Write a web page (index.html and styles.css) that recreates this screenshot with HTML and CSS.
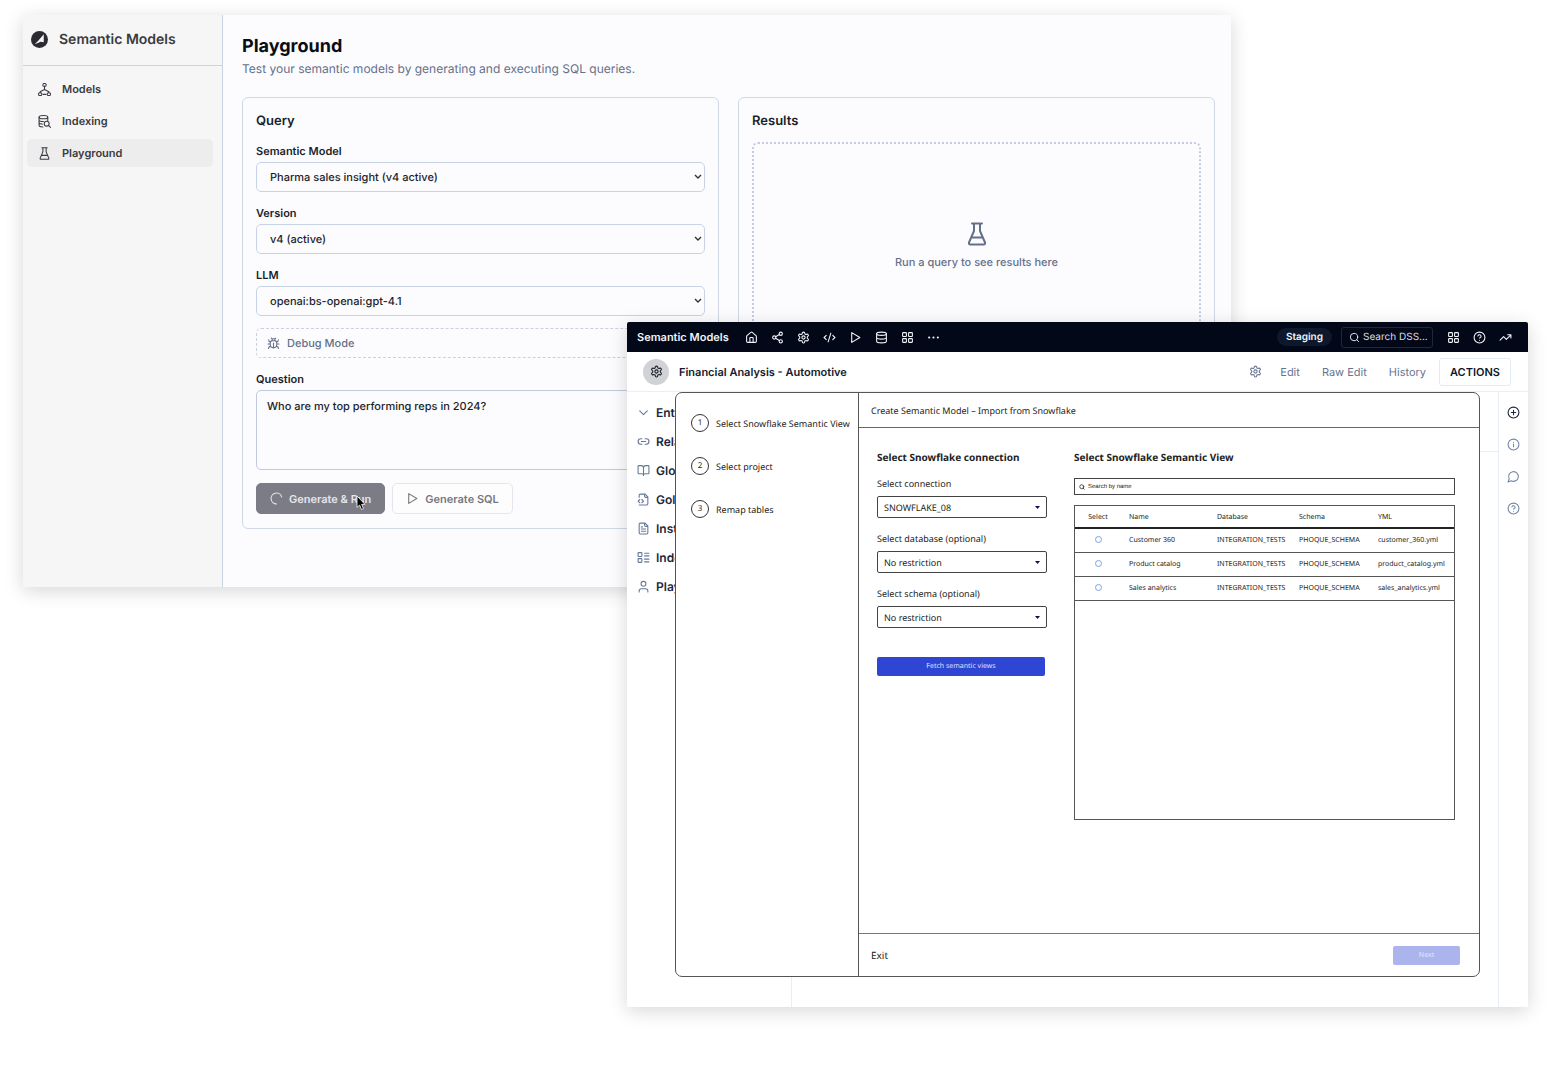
FILE: index.html
```html
<!DOCTYPE html>
<html lang="en">
<head>
    <meta charset="UTF-8">
    <title>Semantic Models</title>
    <link rel="stylesheet" href="styles.css">
</head>
<body>
    <svg class="sprite" aria-hidden="true">
        <symbol id="i-tree" viewBox="0 0 24 24"><rect x="9" y="1" width="6" height="5" rx="2"/><rect x="1" y="18" width="6" height="5" rx="2"/><rect x="17" y="18" width="6" height="5" rx="2"/><path d="M12 6v6M4 18v-2l8-4 8 4v2M9.500 21h5"/></symbol>
        <symbol id="i-dbsearch" viewBox="0 0 24 24"><ellipse cx="10" cy="4" rx="8" ry="3"/><path d="M2 4v15c0 1.700 3 3 7 3M2 9c0 1.700 3.500 3 8 3M2 14c0 1.700 2.500 2.600 6 2.900M18 4v6"/><circle cx="16" cy="16" r="4.500"/><path d="M19.300 19.300L23 23"/></symbol>
        <symbol id="i-flask" viewBox="0 0 24 24"><path d="M7 1.500h10M9 1.500V9L4 20.500c-.4 1 .2 2 1.300 2h13.400c1.100 0 1.700-1 1.300-2L15 9V1.500M6.500 15.500h11"/></symbol>
        <symbol id="i-bug" viewBox="0 0 24 24"><path d="m8 2 1.880 1.880M14.120 3.880 16 2M9 7.130v-1a3 3 0 1 1 6 0v1M12 20c-3.300 0-6-2.700-6-6v-3a4 4 0 0 1 4-4h4a4 4 0 0 1 4 4v3c0 3.300-2.700 6-6 6M12 20v-9M6.530 9C4.600 8.800 3 7.100 3 5M6 13H2M3 21c0-2.100 1.700-3.900 3.800-4M20.970 5c0 2.100-1.600 3.800-3.500 4M22 13h-4M17.200 17c2.100.1 3.800 1.900 3.800 4"/></symbol>
        <symbol id="i-loader" viewBox="0 0 24 24"><path d="M12 22A10 10 0 1 1 21.500 9"/></symbol>
        <symbol id="i-play" viewBox="0 0 24 24"><path d="M5 3l15 9-15 9z"/></symbol>
        <symbol id="i-home" viewBox="0 0 24 24"><path d="M15 21v-8a1 1 0 0 0-1-1h-4a1 1 0 0 0-1 1v8M3 10a2 2 0 0 1 .700-1.500l7-6a2 2 0 0 1 2.600 0l7 6A2 2 0 0 1 21 10v9a2 2 0 0 1-2 2H5a2 2 0 0 1-2-2z"/></symbol>
        <symbol id="i-share" viewBox="0 0 24 24"><circle cx="18" cy="5" r="3"/><circle cx="6" cy="12" r="3"/><circle cx="18" cy="19" r="3"/><path d="M8.600 13.500l6.800 4M15.400 6.500l-6.800 4"/></symbol>
        <symbol id="i-gear" viewBox="0 0 24 24"><path d="M12.220 2h-.44a2 2 0 0 0-2 2v.18a2 2 0 0 1-1 1.730l-.43.25a2 2 0 0 1-2 0l-.15-.08a2 2 0 0 0-2.730.73l-.22.38a2 2 0 0 0 .73 2.730l.15.1a2 2 0 0 1 1 1.720v.51a2 2 0 0 1-1 1.740l-.15.09a2 2 0 0 0-.73 2.730l.22.38a2 2 0 0 0 2.730.73l.15-.08a2 2 0 0 1 2 0l.43.25a2 2 0 0 1 1 1.730V20a2 2 0 0 0 2 2h.44a2 2 0 0 0 2-2v-.18a2 2 0 0 1 1-1.730l.43-.25a2 2 0 0 1 2 0l.15.08a2 2 0 0 0 2.730-.73l.22-.39a2 2 0 0 0-.73-2.730l-.15-.08a2 2 0 0 1-1-1.740v-.5a2 2 0 0 1 1-1.740l.15-.09a2 2 0 0 0 .73-2.730l-.22-.38a2 2 0 0 0-2.730-.73l-.15.08a2 2 0 0 1-2 0l-.43-.25a2 2 0 0 1-1-1.730V4a2 2 0 0 0-2-2z"/><circle cx="12" cy="12" r="3"/></symbol>
        <symbol id="i-code" viewBox="0 0 24 24"><path d="M18 16l4-4-4-4M6 8l-4 4 4 4M14.500 4l-5 16"/></symbol>
        <symbol id="i-db" viewBox="0 0 24 24"><ellipse cx="12" cy="5" rx="9" ry="3"/><path d="M3 5v14a9 3 0 0 0 18 0V5M3 12a9 3 0 0 0 18 0"/></symbol>
        <symbol id="i-grid" viewBox="0 0 24 24"><rect x="3" y="3" width="7" height="7" rx="1"/><rect x="14" y="3" width="7" height="7" rx="1"/><rect x="14" y="14" width="7" height="7" rx="1"/><rect x="3" y="14" width="7" height="7" rx="1"/></symbol>
        <symbol id="i-dots" viewBox="0 0 24 24"><circle cx="4" cy="12" r="1"/><circle cx="12" cy="12" r="1"/><circle cx="20" cy="12" r="1"/></symbol>
        <symbol id="i-search" viewBox="0 0 24 24"><circle cx="11" cy="11" r="8"/><path d="M21 21l-4.300-4.300"/></symbol>
        <symbol id="i-help" viewBox="0 0 24 24"><circle cx="12" cy="12" r="10"/><path d="M9.090 9a3 3 0 0 1 5.830 1c0 2-3 3-3 3M12 17h.01"/></symbol>
        <symbol id="i-trend" viewBox="0 0 24 24"><path d="M22 7l-8.500 8.500-5-5L2 17M16 7h6v6"/></symbol>
        <symbol id="i-chevron" viewBox="0 0 24 24"><path d="M5 9l7 7 7-7"/></symbol>
        <symbol id="i-link" viewBox="0 0 24 24"><path d="M9 17H7A5 5 0 0 1 7 7h2M15 7h2a5 5 0 1 1 0 10h-2M8 12h8"/></symbol>
        <symbol id="i-book" viewBox="0 0 24 24"><path d="M12 7v14M3 18a1 1 0 0 1-1-1V4a1 1 0 0 1 1-1h5a4 4 0 0 1 4 4 4 4 0 0 1 4-4h5a1 1 0 0 1 1 1v13a1 1 0 0 1-1 1h-6a3 3 0 0 0-3 3 3 3 0 0 0-3-3z"/></symbol>
        <symbol id="i-filecode" viewBox="0 0 24 24"><path d="M4 22h14a2 2 0 0 0 2-2V7l-5-5H6a2 2 0 0 0-2 2v4M14 2v4a2 2 0 0 0 2 2h4M5 12l-3 3 3 3M9 18l3-3-3-3"/></symbol>
        <symbol id="i-file" viewBox="0 0 24 24"><path d="M15 2H6a2 2 0 0 0-2 2v16a2 2 0 0 0 2 2h12a2 2 0 0 0 2-2V7zM14 2v4a2 2 0 0 0 2 2h4M10 9H8M16 13H8M16 17H8"/></symbol>
        <symbol id="i-list" viewBox="0 0 24 24"><rect x="2" y="3" width="7" height="7" rx="1"/><rect x="2" y="14" width="7" height="7" rx="1"/><path d="M14 4h8M14 9h8M14 15h8M14 20h8"/></symbol>
        <symbol id="i-user" viewBox="0 0 24 24"><circle cx="12" cy="7" r="4.500"/><path d="M20 22v-2a4 4 0 0 0-4-4H8a4 4 0 0 0-4 4v2"/></symbol>
        <symbol id="i-plus" viewBox="0 0 24 24"><circle cx="12" cy="12" r="10"/><path d="M8 12h8M12 8v8"/></symbol>
        <symbol id="i-info" viewBox="0 0 24 24"><circle cx="12" cy="12" r="10"/><path d="M12 16v-5M12 8h.01"/></symbol>
        <symbol id="i-chat" viewBox="0 0 24 24"><path d="M7.900 20A9 9 0 1 0 4 16.100L2 22z"/></symbol>
    </svg>

    <!-- Playground -->
    <div class="window playground">
        <aside class="side">
            <div class="brand">
                <svg class="logo" viewBox="0 0 16 16"><circle cx="8" cy="8" r="8"/><path class="bird" d="M12 3v7.500L9 10l-2 1-3.500 1.500L7 9z"/></svg>
                <span>Semantic Models</span>
            </div>
            <nav class="side-nav">
                <a href="#"><svg class="icon"><use href="#i-tree"/></svg>Models</a>
                <a href="#"><svg class="icon"><use href="#i-dbsearch"/></svg>Indexing</a>
                <a href="#" class="active"><svg class="icon"><use href="#i-flask"/></svg>Playground</a>
            </nav>
        </aside>
        <main class="content">
            <h1>Playground</h1>
            <p class="subtitle">Test your semantic models by generating and executing SQL queries.</p>
            <div class="cards">
                <form class="card">
                    <h2>Query</h2>
                    <label for="model">Semantic Model</label>
                    <select id="model"><option>Pharma sales insight (v4 active)</option></select>
                    <label for="version">Version</label>
                    <select id="version"><option>v4 (active)</option></select>
                    <label for="llm">LLM</label>
                    <select id="llm"><option>openai:bs-openai:gpt-4.1</option></select>
                    <button type="button" class="debug"><svg class="icon"><use href="#i-bug"/></svg>Debug Mode</button>
                    <label for="question">Question</label>
                    <textarea id="question">Who are my top performing reps in 2024?</textarea>
                    <div class="buttons">
                        <button type="button" class="btn primary">
                            <svg class="icon"><use href="#i-loader"/></svg>Generate &amp; Run
                            <svg class="cursor" viewBox="0 0 10 16"><path d="M1 1v11.500l2.600-2.400L5.500 14.500l2-.9-1.900-4.200H9z"/></svg>
                        </button>
                        <button type="button" class="btn"><svg class="icon"><use href="#i-play"/></svg>Generate SQL</button>
                    </div>
                </form>
                <section class="card">
                    <h2>Results</h2>
                    <div class="empty">
                        <svg class="icon"><use href="#i-flask"/></svg>
                        <p>Run a query to see results here</p>
                    </div>
                </section>
            </div>
        </main>
    </div>

    <!-- Model editor with the import wizard open -->
    <div class="window editor">
        <header class="topbar">
            <strong>Semantic Models</strong>
            <nav class="topbar-icons">
                <a href="#" aria-label="Home"><svg class="icon"><use href="#i-home"/></svg></a>
                <a href="#" aria-label="Flow"><svg class="icon"><use href="#i-share"/></svg></a>
                <a href="#" aria-label="Settings"><svg class="icon"><use href="#i-gear"/></svg></a>
                <a href="#" aria-label="Code"><svg class="icon"><use href="#i-code"/></svg></a>
                <a href="#" aria-label="Jobs"><svg class="icon"><use href="#i-play"/></svg></a>
                <a href="#" aria-label="Data"><svg class="icon"><use href="#i-db"/></svg></a>
                <a href="#" aria-label="Dashboards"><svg class="icon"><use href="#i-grid"/></svg></a>
                <a href="#" aria-label="More"><svg class="icon"><use href="#i-dots"/></svg></a>
            </nav>
            <span class="pill">Staging</span>
            <div class="dss-search">
                <svg class="icon"><use href="#i-search"/></svg>
                <input type="text" placeholder="Search DSS..." aria-label="Search DSS">
            </div>
            <nav class="topbar-icons">
                <a href="#" aria-label="Apps"><svg class="icon"><use href="#i-grid"/></svg></a>
                <a href="#" aria-label="Help"><svg class="icon"><use href="#i-help"/></svg></a>
                <a href="#" aria-label="Activity"><svg class="icon"><use href="#i-trend"/></svg></a>
            </nav>
        </header>
        <div class="titlebar">
            <span class="avatar"><svg class="icon"><use href="#i-gear"/></svg></span>
            <h2>Financial Analysis - Automotive</h2>
            <nav class="tabs">
                <a href="#" aria-label="Settings"><svg class="icon"><use href="#i-gear"/></svg></a>
                <a href="#">Edit</a>
                <a href="#">Raw Edit</a>
                <a href="#">History</a>
            </nav>
            <button type="button" class="actions">ACTIONS</button>
        </div>
        <div class="workspace">
            <nav class="sections">
                <a href="#"><svg class="icon"><use href="#i-chevron"/></svg>Entities</a>
                <a href="#"><svg class="icon"><use href="#i-link"/></svg>Relations</a>
                <a href="#"><svg class="icon"><use href="#i-book"/></svg>Glossary</a>
                <a href="#"><svg class="icon"><use href="#i-filecode"/></svg>Golden</a>
                <a href="#"><svg class="icon"><use href="#i-file"/></svg>Instructions</a>
                <a href="#"><svg class="icon"><use href="#i-list"/></svg>Indexing</a>
                <a href="#"><svg class="icon"><use href="#i-user"/></svg>Playground</a>
            </nav>
            <div class="canvas"><div class="canvas-head"></div></div>
            <nav class="rail">
                <a href="#" class="current" aria-label="Add"><svg class="icon"><use href="#i-plus"/></svg></a>
                <a href="#" aria-label="Info"><svg class="icon"><use href="#i-info"/></svg></a>
                <a href="#" aria-label="Chat"><svg class="icon"><use href="#i-chat"/></svg></a>
                <a href="#" aria-label="Help"><svg class="icon"><use href="#i-help"/></svg></a>
            </nav>

            <div class="wizard">
                <ol class="steps">
                    <li><span>1</span>Select Snowflake Semantic View</li>
                    <li><span>2</span>Select project</li>
                    <li><span>3</span>Remap tables</li>
                </ol>
                <div class="panel">
                    <div class="panel-head">Create Semantic Model – Import from Snowflake</div>
                    <div class="panel-body">
                        <form class="connection">
                            <h3>Select Snowflake connection</h3>
                            <label for="conn">Select connection</label>
                            <select id="conn"><option>SNOWFLAKE_08</option></select>
                            <label for="db">Select database (optional)</label>
                            <select id="db"><option>No restriction</option></select>
                            <label for="schema">Select schema (optional)</label>
                            <select id="schema"><option>No restriction</option></select>
                            <button type="button" class="small-btn">Fetch semantic views</button>
                        </form>
                        <section class="views">
                            <h3>Select Snowflake Semantic View</h3>
                            <div class="name-search">
                                <svg class="icon"><use href="#i-search"/></svg>
                                <input type="text" placeholder="Search by name" aria-label="Search by name">
                            </div>
                            <div class="table-box">
                                <table>
                                    <thead>
                                        <tr><th class="pick">Select</th><th class="name">Name</th><th class="database">Database</th><th class="schema">Schema</th><th>YML</th></tr>
                                    </thead>
                                    <tbody>
                                        <tr><td class="pick"><input type="radio" name="view" aria-label="Customer 360"></td><td>Customer 360</td><td>INTEGRATION_TESTS</td><td>PHOQUE_SCHEMA</td><td>customer_360.yml</td></tr>
                                        <tr><td class="pick"><input type="radio" name="view" aria-label="Product catalog"></td><td>Product catalog</td><td>INTEGRATION_TESTS</td><td>PHOQUE_SCHEMA</td><td>product_catalog.yml</td></tr>
                                        <tr><td class="pick"><input type="radio" name="view" aria-label="Sales analytics"></td><td>Sales analytics</td><td>INTEGRATION_TESTS</td><td>PHOQUE_SCHEMA</td><td>sales_analytics.yml</td></tr>
                                    </tbody>
                                </table>
                            </div>
                        </section>
                    </div>
                    <div class="panel-foot">
                        <a href="#">Exit</a>
                        <button type="button" class="small-btn" disabled>Next</button>
                    </div>
                </div>
            </div>
        </div>
    </div>
</body>
</html>
```
FILE: styles.css
```css
* {
    box-sizing: border-box;
}
body {
    margin: 0;
    min-height: 100vh;
    background: #fff;
    font-family: Inter, sans-serif;
    font-size: 11px;
    color: #1b1f2a;
    text-rendering: geometricPrecision;
}
h1, h2, h3, p, ol {
    margin: 0;
    padding: 0;
}
a {
    color: inherit;
    text-decoration: none;
}
button, input, select, textarea {
    font: inherit;
    color: inherit;
    text-rendering: inherit;
}
.sprite {
    display: none;
}
.icon {
    width: 13px;
    height: 13px;
    flex: none;
    fill: none;
    stroke: currentColor;
    stroke-width: 2;
    stroke-linecap: round;
    stroke-linejoin: round;
}
.window {
    position: absolute;
    box-shadow: 0 4px 18px rgba(0, 0, 0, 0.16);
}

/* playground window */
.playground {
    top: 15px;
    left: 23px;
    right: 335px;
    display: flex;
    background: #fcfcfe;
}
.side {
    width: 200px;
    flex: none;
    background: #f6f6f7;
    border-right: 1px solid #c9d3e2;
    color: #3a3a40;
}
.brand {
    display: flex;
    align-items: center;
    gap: 11px;
    height: 51px;
    padding: 0 8px 2px;
    border-bottom: 1px solid #c9d3e2;
    font-size: 14px;
    font-weight: 600;
}
.logo {
    width: 17px;
    height: 17px;
    fill: #2b2b31;
}
.bird {
    fill: #f6f6f7;
}
.side-nav {
    display: flex;
    flex-direction: column;
    gap: 4px;
    padding: 9px 9px 9px 4px;
}
.side-nav a {
    display: flex;
    align-items: center;
    gap: 11px;
    height: 28px;
    padding: 0 11px;
    border-radius: 5px;
    font-weight: 600;
}
.side-nav .active {
    background: #ededee;
}
.content {
    flex: 1;
    padding: 20px 16px 58px 19px;
}
h1 {
    font-size: 18px;
    line-height: 24px;
    font-weight: 700;
    color: #0b0d14;
}
.subtitle {
    font-size: 12px;
    line-height: 20px;
    color: #64708a;
}
.cards {
    display: grid;
    grid-template-columns: 1fr 1fr;
    gap: 19px;
    margin-top: 18px;
}
.card {
    padding: 14px 13px;
    border: 1px solid #d0d8e6;
    border-radius: 6px;
}
.card h2 {
    margin-bottom: 12px;
    font-size: 13px;
    line-height: 18px;
    font-weight: 600;
}
.card label {
    display: block;
    margin-bottom: 2px;
    line-height: 18px;
    font-weight: 600;
}
.card select {
    display: block;
    width: 100%;
    height: 30px;
    margin-bottom: 12px;
    padding: 0 13px;
    border: 1px solid #c9d3e6;
    border-radius: 5px;
    appearance: none;
    background: #fcfcfe url("data:image/svg+xml,%3Csvg xmlns='http://www.w3.org/2000/svg' width='8' height='6' fill='none' stroke='%23333' stroke-width='1.400'%3E%3Cpath d='M1 1l3 3 3-3'/%3E%3C/svg%3E") no-repeat right 2px center;
    font-weight: 500;
}
.debug {
    display: flex;
    align-items: center;
    gap: 7px;
    width: 100%;
    height: 30px;
    margin-bottom: 12px;
    padding: 0 10px;
    border: 1px dashed #c9d1df;
    border-radius: 5px;
    background: none;
    color: #64708a;
    font-weight: 500;
}
textarea {
    display: block;
    width: 100%;
    height: 80px;
    padding: 7px 10px;
    border: 1px solid #c0c9dd;
    border-radius: 5px;
    resize: none;
    background: #fcfcfe;
    line-height: 16px;
    font-weight: 500;
}
.buttons {
    display: flex;
    gap: 7px;
    margin-top: 13px;
}
.btn {
    position: relative;
    display: flex;
    align-items: center;
    gap: 6px;
    height: 31px;
    padding: 0 13px;
    border: 1px solid #e3e6ed;
    border-radius: 5px;
    background: #fdfdfe;
    color: #77777f;
    font-weight: 600;
}
.btn.primary {
    border-color: #7c7c86;
    background: #7c7c86;
    color: #e6e6ea;
}
.cursor {
    position: absolute;
    left: 99px;
    top: 11px;
    width: 10px;
    height: 16px;
    fill: #000;
    stroke: #ddd;
}
.empty {
    display: flex;
    flex-direction: column;
    align-items: center;
    justify-content: center;
    gap: 8px;
    min-height: 208px;
    border: 2px dotted #c3cce0;
    border-radius: 6px;
    color: #64708a;
    font-weight: 500;
}
.empty .icon {
    width: 24px;
    height: 24px;
}
.empty p {
    line-height: 16px;
}

/* editor window */
.editor {
    top: 322px;
    left: 627px;
    right: 38px;
    background: #fff;
}
.topbar {
    display: flex;
    align-items: center;
    height: 30px;
    padding: 0 16px 0 10px;
    border-radius: 2px 2px 0 0;
    background: #020817;
    color: #f1f4f9;
}
.topbar strong {
    margin-right: 16px;
    font-weight: 600;
}
.topbar-icons {
    display: flex;
    gap: 13px;
}
.topbar-icons a {
    display: flex;
}
.pill {
    margin-left: auto;
    padding: 0 9px;
    border-radius: 9px;
    background: #0d182c;
    font-size: 10px;
    line-height: 18px;
    font-weight: 600;
}
.dss-search {
    display: flex;
    align-items: center;
    gap: 3px;
    width: 92px;
    height: 21px;
    margin: 0 14px 0 9px;
    padding: 0 2px 0 7px;
    border: 1px solid #1e293b;
    border-radius: 3px;
}
.dss-search .icon {
    width: 11px;
    height: 11px;
}
.dss-search input {
    width: 100%;
    min-width: 0;
    padding: 0;
    border: 0;
    outline: 0;
    background: none;
    font-size: 10px;
}
.dss-search input::placeholder {
    color: #d9dee7;
}
.titlebar {
    display: flex;
    align-items: center;
    height: 40px;
    padding: 0 17px 0 16px;
    border-bottom: 1px solid #eaeff6;
}
.avatar {
    display: flex;
    align-items: center;
    justify-content: center;
    width: 26px;
    height: 26px;
    margin-right: 10px;
    border-radius: 50%;
    background: #d1d2d6;
}
.titlebar h2 {
    font-size: 11px;
    font-weight: 600;
    color: #141b2d;
}
.tabs {
    display: flex;
    align-items: center;
    gap: 22px;
    margin-left: auto;
    color: #66758f;
}
.tabs a:first-child {
    display: flex;
    margin-right: -4px;
}
.actions {
    height: 28px;
    margin-left: 13px;
    padding: 0 10px;
    border: 1px solid #e4eaf2;
    border-radius: 3px;
    background: #fff;
    font-weight: 600;
    color: #0f172a;
}
.workspace {
    display: grid;
    grid-template-columns: 165px 1fr 30px;
}
.sections {
    grid-area: 1 / 1;
    padding: 6px 10px;
    border-right: 1px solid #e8eef6;
    font-size: 12px;
    font-weight: 600;
    color: #1d263b;
}
.sections a {
    display: flex;
    align-items: center;
    gap: 6px;
    height: 29px;
}
.sections .icon {
    color: #66799b;
}
.canvas {
    grid-area: 1 / 2;
}
.canvas-head {
    height: 60px;
    border-bottom: 1px solid #e8eef6;
}
.rail {
    grid-area: 1 / 3;
    display: flex;
    flex-direction: column;
    align-items: center;
    gap: 19px;
    padding-top: 14px;
    border-left: 1px solid #e8eef6;
    color: #7385a3;
}
.rail a {
    display: flex;
}
.rail .current {
    color: #1d263b;
}

/* import wizard, laid over the workspace */
.wizard {
    grid-area: 1 / 1 / 2 / 4;
    z-index: 1;
    display: flex;
    margin: 0 48px 30px;
    border: 1px solid #555;
    border-radius: 7px;
    background: #fff;
    font-family: "Noto Sans", sans-serif;
    font-size: 9px;
    color: #222;
}
.steps {
    display: flex;
    flex-direction: column;
    gap: 25px;
    width: 183px;
    padding: 21px 0 0 15px;
    border-right: 1px solid #555;
    list-style: none;
}
.steps li {
    display: flex;
    align-items: center;
    gap: 7px;
    white-space: nowrap;
}
.steps span {
    width: 18px;
    border: 1px solid #333;
    border-radius: 50%;
    line-height: 16px;
    font-size: 8px;
    text-align: center;
}
.panel {
    flex: 1;
}
.panel-head {
    padding: 2px 12px 0;
    border-bottom: 1px solid #666;
    line-height: 32px;
}
.panel-body {
    display: flex;
    gap: 27px;
    padding: 21px 24px 113px 18px;
}
.panel h3 {
    font-size: 10px;
    line-height: 16px;
    font-weight: 700;
}
.connection {
    width: 170px;
}
.connection h3 {
    margin-bottom: 11px;
}
.connection label {
    display: block;
    margin-bottom: 4px;
    line-height: 16px;
}
.connection select {
    display: block;
    width: 100%;
    height: 22px;
    margin-bottom: 13px;
    padding: 0 6px;
    border: 1px solid #444;
    border-radius: 2px;
    appearance: none;
    background: #fff url("data:image/svg+xml,%3Csvg xmlns='http://www.w3.org/2000/svg' width='5' height='3'%3E%3Cpath d='M0 0h5L2.500 3z' fill='%23101050'/%3E%3C/svg%3E") no-repeat right 6px center;
}
.small-btn {
    height: 19px;
    border: 0;
    border-radius: 2px;
    background: #2f45d3;
    color: #dde1fa;
    font-size: 7px;
}
.connection .small-btn {
    width: 168px;
    margin-top: 16px;
}
.views {
    flex: 1;
}
.name-search {
    display: flex;
    align-items: center;
    gap: 3px;
    height: 17px;
    margin: 13px 0 10px;
    padding: 0 4px;
    border: 1px solid #444;
}
.name-search .icon {
    width: 6px;
    height: 6px;
    stroke-width: 3;
}
.name-search input {
    flex: 1;
    padding: 0;
    border: 0;
    outline: 0;
    font-family: "Liberation Sans", sans-serif;
    font-size: 6px;
}
.name-search input::placeholder {
    color: #222;
}
.table-box {
    min-height: 315px;
    border: 1px solid #555;
}
table {
    width: 100%;
    border-collapse: collapse;
    table-layout: fixed;
    font-size: 7px;
}
th, td {
    height: 24px;
    padding: 0;
    border-bottom: 1px solid #555;
    font-weight: 400;
    text-align: left;
    white-space: nowrap;
}
th {
    height: 22px;
    padding-top: 2px;
    border-bottom: 2px solid #222;
}
.pick {
    width: 54px;
    padding-right: 8px;
    text-align: center;
}
.name {
    width: 88px;
}
.database {
    width: 82px;
}
.schema {
    width: 79px;
}
td input {
    width: 7px;
    height: 7px;
    margin: 0;
    border: 1px solid #7da2e0;
    border-radius: 50%;
    appearance: none;
    vertical-align: middle;
}
.panel-foot {
    display: flex;
    align-items: center;
    justify-content: space-between;
    height: 43px;
    padding: 0 19px 0 12px;
    border-top: 1px solid #777;
    font-size: 10px;
}
.panel-foot .small-btn {
    width: 67px;
    background: #acb4ee;
    color: #e4e7fb;
}
```
